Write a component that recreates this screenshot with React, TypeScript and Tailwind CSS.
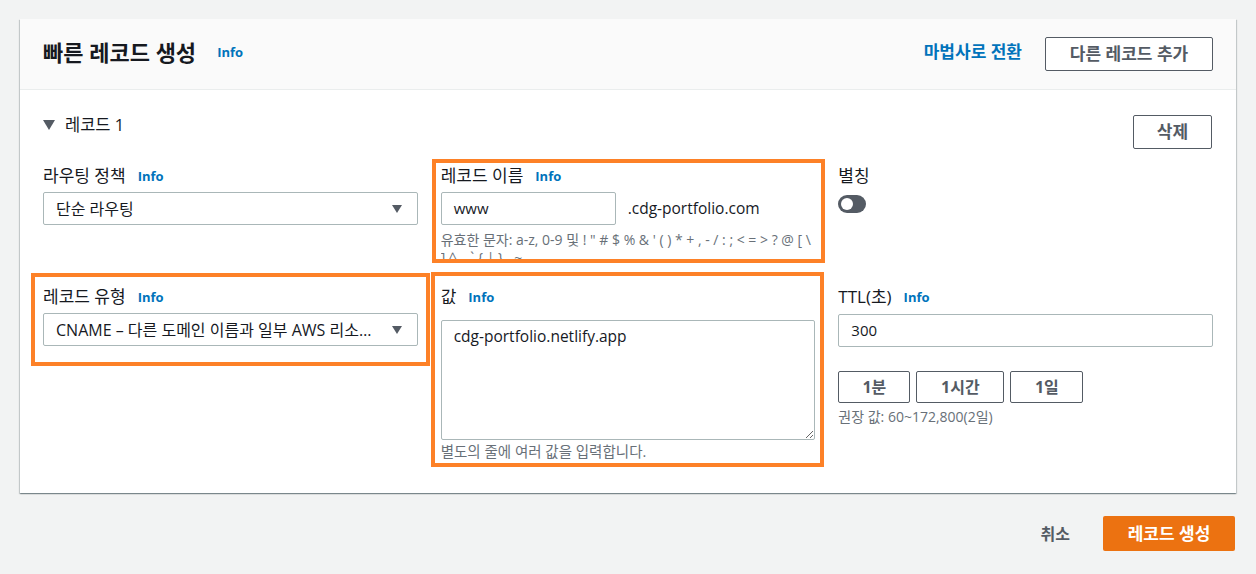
import React from "react";

const INFO = "text-[13px] font-bold text-[#0073bb] leading-5";

function Label({ text, info = true }: { text: string; info?: boolean }) {
  return (
    <div className="flex h-5 items-center gap-3">
      <span className="text-[17px] leading-5 text-[#16191f]">{text}</span>
      {info && <span className={INFO}>Info</span>}
    </div>
  );
}

function Caret() {
  return (
    <svg width="10" height="8" viewBox="0 0 10 8" className="shrink-0">
      <path d="M0 0h10L5 8z" fill="#545b64" />
    </svg>
  );
}

function Select({ value }: { value: string }) {
  return (
    <div className="mt-[6px] flex h-[33px] items-center gap-2 rounded-[2px] border border-[#aab7b8] bg-white pl-3 pr-[15px]">
      <span className="flex-1 truncate text-[16px] text-[#16191f]">{value}</span>
      <Caret />
    </div>
  );
}

// orange annotation frame drawn over a field
function Mark({ className }: { className: string }) {
  return <div className={`pointer-events-none absolute border-4 border-[#fd8127] ${className}`} />;
}

function Btn({ children, className = "" }: { children: React.ReactNode; className?: string }) {
  return (
    <button
      className={`flex items-center justify-center rounded-[2px] border border-[#545b64] bg-white font-bold text-[#545b64] ${className}`}
    >
      {children}
    </button>
  );
}

export default function App() {
  return (
    <div className="min-h-[574px] bg-[#f2f3f3] px-5 pt-[19px] [font-family:'Open_Sans','Noto_Sans_CJK_KR',sans-serif]">
      <div className="bg-white shadow-[0_1px_1px_0_rgba(0,28,36,0.3),1px_1px_1px_0_rgba(0,28,36,0.15),-1px_1px_1px_0_rgba(0,28,36,0.15)]">
        {/* header */}
        <div className="flex h-[71px] items-center justify-between border-b border-[#eaeded] bg-[#fafafa] px-[23px]">
          <div className="flex items-center gap-[21px] pb-[4px]">
            <h2 className="text-[22px] font-bold leading-7 text-[#16191f]">빠른 레코드 생성</h2>
            <span className={INFO}>Info</span>
          </div>
          <div className="flex items-center gap-[23px]">
            <span className="pb-[4px] text-[17px] font-semibold text-[#0073bb]">마법사로 전환</span>
            <Btn className="h-[34px] w-[168px] text-[17px]">다른 레코드 추가</Btn>
          </div>
        </div>

        {/* body */}
        <div className="px-[23px] pb-[33px] pt-[25px]">
          <div className="flex items-start justify-between">
            <div className="flex h-5 items-center gap-[10px]">
              <svg width="12" height="10" viewBox="0 0 12 10">
                <path d="M0 0h12L6 10z" fill="#545b64" />
              </svg>
              <span className="text-[16.5px] text-[#16191f]">레코드 1</span>
            </div>
            <Btn className="mr-[1px] h-[34px] w-[79px] text-[17px]">삭제</Btn>
          </div>

          <div className="mt-[17px] grid grid-cols-3 gap-x-[23px] gap-y-[25px]">
            {/* row 1 */}
            <div>
              <Label text="라우팅 정책" />
              <Select value="단순 라우팅" />
            </div>

            <div className="relative">
              <Label text="레코드 이름" />
              <div className="mt-[6px] flex items-center gap-3">
                <div className="flex h-[33px] w-[175px] items-center rounded-[2px] border border-[#aab7b8] px-3 text-[15px] text-[#16191f]">
                  www
                </div>
                <span className="text-[15.5px] text-[#16191f]">.cdg-portfolio.com</span>
              </div>
              <div className="mt-[6px] h-[31px] overflow-hidden text-[14px] leading-[18px] text-[#687078]">
                <div className="whitespace-nowrap">
                  유효한 문자: a-z, 0-9 및 ! " # $ % &amp; ' ( ) * + , - / : ; &lt; = &gt; ? @ [ \
                </div>
                <div className="whitespace-nowrap">] ^ _ ` {"{"} | {"}"} . ~</div>
              </div>
              <Mark className="-left-[9px] -right-[10px] -top-[7px] -bottom-[1px]" />
            </div>

            <div>
              <Label text="별칭" info={false} />
              <div className="mt-[9px] flex h-[18px] w-[28px] items-center rounded-full bg-[#545b64] px-[3px]">
                <div className="h-3 w-3 rounded-full bg-white" />
              </div>
            </div>

            {/* row 2 */}
            <div className="relative self-start">
              <Label text="레코드 유형" />
              <Select value="CNAME – 다른 도메인 이름과 일부 AWS 리소스로 트래픽 라우팅" />
              <Mark className="-left-[12px] -right-[12px] -top-[14px] -bottom-[20px]" />
            </div>

            <div className="relative">
              <Label text="값" />
              <textarea
                readOnly
                defaultValue="cdg-portfolio.netlify.app"
                className="mt-[13px] block h-[120px] w-full resize-y rounded-[2px] border border-[#aab7b8] px-3 py-[4px] text-[15.5px] leading-[22px] text-[#16191f] outline-none"
              />
              <div className="mt-[4px] text-[14.5px] leading-4 text-[#687078]">
                별도의 줄에 여러 값을 입력합니다.
              </div>
              <Mark className="-left-[10px] -right-[9px] -top-[15px] -bottom-[7px]" />
            </div>

            <div>
              <Label text="TTL(초)" />
              <div className="mt-[7px] flex h-[33px] items-center rounded-[2px] border border-[#aab7b8] px-3 text-[15px] text-[#16191f]">
                300
              </div>
              <div className="mt-[24px] flex gap-[6px]">
                <Btn className="h-[32px] w-[72px] text-[16px]">1분</Btn>
                <Btn className="h-[32px] w-[88px] text-[16px]">1시간</Btn>
                <Btn className="h-[32px] w-[73px] text-[16px]">1일</Btn>
              </div>
              <div className="mt-[6px] text-[14px] leading-4 text-[#687078]">
                권장 값: 60~172,800(2일)
              </div>
            </div>
          </div>
        </div>
      </div>

      {/* footer */}
      <div className="mt-[23px] flex items-center justify-end gap-[33px] pr-[1px]">
        <span className="text-[16px] font-bold text-[#545b64]">취소</span>
        <button className="h-[35px] w-[132px] rounded-[2px] bg-[#ec7211] text-[17px] font-bold text-white">
          레코드 생성
        </button>
      </div>
    </div>
  );
}
